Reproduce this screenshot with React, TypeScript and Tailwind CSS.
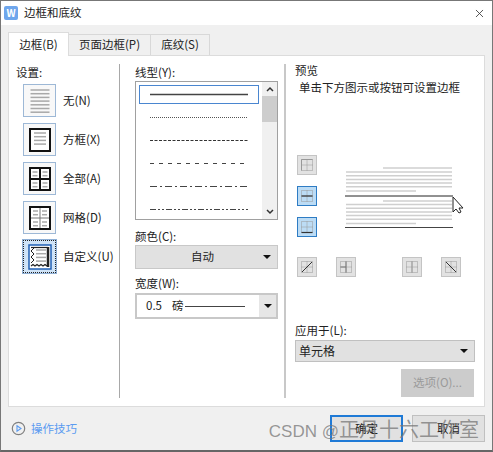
import type { ReactNode } from "react";
import { X } from "lucide-react";

const LINE_SAMPLES = [
    { dash: "", width: 1.5, color: "#444" },
    { dash: "1 1", width: 1, color: "#555" },
    { dash: "3 1.5", width: 1.2, color: "#333" },
    { dash: "4 5", width: 1.2, color: "#444" },
    { dash: "7 3 2 3", width: 1.2, color: "#444" },
    { dash: "6 2 2 2 2 2", width: 1.2, color: "#444" },
];

function TextLines({ x, y, w, rows, color = "#a8a8a8" }: { x: number; y: number; w: number; rows: number; color?: string }) {
    return (
        <>
            {Array.from({ length: rows }).map((_, i) => (
                <line key={i} x1={x} x2={x + w} y1={y + i * 3.7} y2={y + i * 3.7} stroke={color} strokeWidth="1.5" />
            ))}
        </>
    );
}

function SettingIcon({ kind }: { kind: string }) {
    return (
        <svg width="24" height="26" viewBox="0 0 24 26">
            {kind === "none" && <TextLines x={2.5} y={2} w={19} rows={7} />}
            {kind === "box" && (
                <>
                    <rect x="2" y="2" width="20" height="22" fill="#fff" stroke="#111" strokeWidth="2" />
                    <TextLines x={6} y={6} w={12} rows={4} />
                </>
            )}
            {kind === "all" && (
                <>
                    <rect x="2" y="2" width="20" height="22" fill="#fff" stroke="#111" strokeWidth="2" />
                    <line x1="12" x2="12" y1="2" y2="24" stroke="#111" strokeWidth="2" />
                    <line x1="2" x2="22" y1="13" y2="13" stroke="#111" strokeWidth="2" />
                    <TextLines x={4.5} y={6} w={5} rows={2} />
                    <TextLines x={14.5} y={6} w={5} rows={2} />
                    <TextLines x={4.5} y={17} w={5} rows={2} />
                    <TextLines x={14.5} y={17} w={5} rows={2} />
                </>
            )}
            {kind === "grid" && (
                <>
                    <rect x="2" y="2" width="20" height="22" fill="#fff" stroke="#111" strokeWidth="2" />
                    <line x1="12" x2="12" y1="3" y2="23" stroke="#777" strokeWidth="1" />
                    <line x1="3" x2="21" y1="13" y2="13" stroke="#777" strokeWidth="1" />
                    <TextLines x={5} y={6} w={5} rows={2} />
                    <TextLines x={14} y={6} w={5} rows={2} />
                    <TextLines x={5} y={17} w={5} rows={2} />
                    <TextLines x={14} y={17} w={5} rows={2} />
                </>
            )}
            {kind === "custom" && (
                <>
                    <rect x="1" y="1" width="22" height="24" fill="#fff" stroke="#1f5fb4" strokeWidth="1.5" />
                    <path d="M20 3v20" stroke="#222" strokeWidth="2.5" />
                    <path d="M3 3.5h17" stroke="#222" strokeWidth="1.2" />
                    <path d="M6 4l-3 3 3 3-3 3 3 3-3 3" fill="none" stroke="#222" strokeWidth="1" />
                    <path d="M3 22l2-1.5 2 1.5 2-1.5 2 1.5 2-1.5 2 1.5 2-1.5 2 1.5" fill="none" stroke="#222" strokeWidth="1.2" />
                    <TextLines x={8} y={6} w={10} rows={4} />
                </>
            )}
        </svg>
    );
}

function SettingRow({ kind, label, selected }: { kind: string; label: string; selected?: boolean }) {
    return (
        <div className="flex items-center">
            <div
                className={
                    selected
                        ? "flex h-[33px] w-[33px] items-center justify-center border border-dotted border-[#222] bg-[#cfe3f7] outline outline-1 outline-[#8fb0d6]"
                        : "flex h-[33px] w-[33px] items-center justify-center border border-[#9db8d6] bg-[#f8f8f8]"
                }
            >
                <SettingIcon kind={kind} />
            </div>
            <span className="ml-[7px] text-[11.5px]">{label}</span>
        </div>
    );
}

function BorderButton({ active, children }: { active?: boolean; children?: ReactNode }) {
    return (
        <div
            className={
                active
                    ? "flex h-5 w-5 items-center justify-center border border-[#2e7cc4] bg-[#bcdcf5]"
                    : "flex h-5 w-5 items-center justify-center border border-[#c4c4c4] bg-[#e2e2e2]"
            }
        >
            <svg width="16" height="16" viewBox="0 0 16 16">
                <rect x="2.5" y="2.5" width="11" height="11" fill="none" stroke="#999" strokeDasharray="1 1" />
                <path d="M8 2.5v11M2.5 8h11" stroke="#999" strokeDasharray="1 1" />
                {children}
            </svg>
        </div>
    );
}

function Caret() {
    return <div className="h-0 w-0 border-x-[4px] border-t-[4px] border-x-transparent border-t-[#111]" />;
}

export default function App() {
    return (
        <div className="relative flex h-[452px] w-[493px] flex-col overflow-hidden border-x border-t border-b-2 border-x-[#777] border-t-[#777] border-b-[#666] bg-[#f0f0f0] font-['Noto_Sans_CJK_SC',sans-serif] text-[#222]">
            {/* title bar */}
            <div className="flex h-[24px] shrink-0 items-center bg-white pl-[3px] pr-[6px]">
                <div className="flex h-[14px] w-[14px] items-center justify-center rounded-[2px] bg-[#6ea6ec] text-[10px] font-bold leading-none text-white">
                    W
                </div>
                <span className="ml-[6px] text-[11.5px]">边框和底纹</span>
                <X className="ml-auto h-[13px] w-[13px] text-[#333]" strokeWidth={1.5} />
            </div>

            {/* tabs */}
            <div className="mt-[7px] flex h-[23px] shrink-0 items-end pl-[7px] text-[11.5px]">
                <div className="z-10 -mb-px flex h-[24px] w-[61px] items-center justify-center border border-b-0 border-[#dcdcdc] bg-white">
                    边框(B)
                </div>
                <div className="flex h-[21px] w-[82px] items-center justify-center border border-b-0 border-l-0 border-[#d8d8d8] bg-[#f0f0f0]">
                    页面边框(P)
                </div>
                <div className="flex h-[21px] w-[59px] items-center justify-center border border-b-0 border-l-0 border-[#d8d8d8] bg-[#f0f0f0]">
                    底纹(S)
                </div>
            </div>

            {/* panel */}
            <div className="mx-[7px] flex h-[352px] shrink-0 border border-[#dcdcdc] bg-white text-[11.5px]">
                {/* settings */}
                <div className="my-2 w-[111px] border-r border-[#a8a8a8] pl-[7px]">
                    <div className="leading-[16px]">设置:</div>
                    <div className="mt-[4px] flex flex-col gap-[6px] pl-[7px]">
                        <SettingRow kind="none" label="无(N)" />
                        <SettingRow kind="box" label="方框(X)" />
                        <SettingRow kind="all" label="全部(A)" />
                        <SettingRow kind="grid" label="网格(D)" />
                        <SettingRow kind="custom" label="自定义(U)" selected />
                    </div>
                </div>

                {/* line style */}
                <div className="my-2 w-[166px] border-r-2 border-[#c8c8c8] pl-[15px]">
                    <div className="leading-[16px]">线型(Y):</div>
                    <div className="mt-[1px] flex h-[139px] w-[143px] border border-[#a0a0a0] bg-white">
                        <div className="w-[126px] pl-[3px] pt-[3px]">
                            {LINE_SAMPLES.map((s, i) => (
                                <div
                                    key={i}
                                    className={
                                        i === 0
                                            ? "flex h-[19px] w-[120px] items-center justify-center border border-[#4a86d0]"
                                            : "mt-[4px] flex h-[19px] w-[120px] items-center justify-center"
                                    }
                                >
                                    <svg width="98" height="3" viewBox="0 0 98 3">
                                        <line x1="0" x2="98" y1="1.5" y2="1.5" stroke={s.color} strokeWidth={s.width} strokeDasharray={s.dash} />
                                    </svg>
                                </div>
                            ))}
                        </div>
                        <div className="flex w-[15px] flex-col items-center bg-[#f0f0f0]">
                            <div className="flex h-[14px] items-center">
                                <svg width="8" height="6" viewBox="0 0 8 6">
                                    <path d="M1 5l3-3 3 3" fill="none" stroke="#333" strokeWidth="1.5" />
                                </svg>
                            </div>
                            <div className="h-[26px] w-full bg-[#cdcdcd]" />
                            <div className="mt-auto flex h-[14px] items-center">
                                <svg width="8" height="6" viewBox="0 0 8 6">
                                    <path d="M1 1l3 3 3-3" fill="none" stroke="#333" strokeWidth="1.5" />
                                </svg>
                            </div>
                        </div>
                    </div>

                    <div className="mt-[8px] leading-[16px]">颜色(C):</div>
                    <div className="mt-[1px] flex h-[24px] w-[143px] items-center border border-[#c8c8c8] bg-[#e1e1e1]">
                        <span className="flex-1 pl-[12px] text-center">自动</span>
                        <div className="px-[6px]">
                            <Caret />
                        </div>
                    </div>

                    <div className="mt-[6px] leading-[16px]">宽度(W):</div>
                    <div className="mt-[2px] flex h-[26px] w-[143px] items-center border-2 border-[#c8c8c8] bg-[#e6e6e6]">
                        <div className="flex h-full w-[122px] items-center bg-white pl-[9px]">
                            <span>0.5</span>
                            <span className="ml-[10px]">磅</span>
                            <div className="ml-[2px] h-px w-[60px] bg-[#444]" />
                        </div>
                        <div className="pl-[5px]">
                            <Caret />
                        </div>
                    </div>
                </div>

                {/* preview */}
                <div className="flex min-w-0 flex-1 flex-col py-2 pl-[9px] pr-[7px]">
                    <div className="mt-[-2px] leading-[16px]">预览</div>
                    <div className="mt-[1px] pl-[4px] text-[11.5px] leading-[16px]">单击下方图示或按钮可设置边框</div>

                    <div className="ml-[2px] mt-[60px] flex items-start">
                        <div className="flex flex-col gap-[11px]">
                            <BorderButton>
                                <path d="M2.5 2.5h11M2.5 2.5v11" stroke="#999" />
                            </BorderButton>
                            <BorderButton active>
                                <path d="M2.5 8h11" stroke="#333" strokeWidth="1.2" />
                            </BorderButton>
                            <BorderButton active>
                                <path d="M2.5 13.5h11" stroke="#333" strokeWidth="1.2" />
                            </BorderButton>
                        </div>
                        <svg className="ml-[28px] mt-[9px]" width="122" height="66" viewBox="345 165 122 66">
                            <TextLines x={383} y={169} w={69} rows={1} color="#cfcfcf" />
                            <TextLines x={346} y={173} w={106} rows={5} color="#cfcfcf" />
                            <TextLines x={346} y={192} w={70} rows={1} color="#cfcfcf" />
                            <line x1="345" x2="453" y1="197" y2="197" stroke="#222" strokeWidth="1" />
                            <TextLines x={383} y={202} w={69} rows={1} color="#cfcfcf" />
                            <TextLines x={346} y={205.5} w={106} rows={5} color="#cfcfcf" />
                            <TextLines x={346} y={224.5} w={70} rows={1} color="#cfcfcf" />
                            <line x1="345" x2="453" y1="228.5" y2="228.5" stroke="#444" strokeWidth="1.2" />
                            <path d="M453 198v15l3-3 3 4 2-1-2-4h4z" fill="#fff" stroke="#222" strokeWidth="1" />
                        </svg>
                    </div>

                    <div className="ml-[2px] mt-[20px] flex">
                        <BorderButton>
                            <path d="M3 13L13 3" stroke="#333" />
                        </BorderButton>
                        <div className="ml-[19px]">
                            <BorderButton>
                                <path d="M8 2.5v11M2.5 8h5.5" stroke="#777" />
                            </BorderButton>
                        </div>
                        <div className="ml-[46px]">
                            <BorderButton>
                                <path d="M8 2.5v11" stroke="#999" />
                            </BorderButton>
                        </div>
                        <div className="ml-[19px]">
                            <BorderButton>
                                <path d="M3 3l10 10" stroke="#333" />
                            </BorderButton>
                        </div>
                    </div>

                    <div className="mt-[45px] leading-[16px]">应用于(L):</div>
                    <div className="mt-[2px] flex h-[22px] w-[180px] items-center justify-between border border-[#c0c0c0] bg-[#e1e1e1] pl-[3px] pr-[6px] text-[12px]">
                        <span>单元格</span>
                        <Caret />
                    </div>
                    <div className="ml-[106px] mt-[7px] flex h-[28px] w-[73px] items-center justify-center bg-[#cccccc] text-[#9a9a9a]">
                        选项(O)...
                    </div>
                </div>
            </div>

            {/* footer */}
            <div className="flex flex-1 items-center pl-[10px] pr-[7px] text-[11.5px]">
                <svg width="15" height="15" viewBox="0 0 15 15">
                    <circle cx="7.5" cy="7.5" r="6.2" fill="none" stroke="#808080" strokeWidth="1.2" />
                    <path d="M6 4.7l4 2.8-4 2.8z" fill="none" stroke="#5b9bf0" strokeWidth="1.1" />
                </svg>
                <span className="ml-[5px] text-[#5b9bf0]">操作技巧</span>
                <div className="ml-auto flex gap-[9px]">
                    <div className="flex h-[27px] w-[73px] items-center justify-center border-2 border-[#1f7ad6] bg-[#e1e1e1]">确定</div>
                    <div className="flex h-[27px] w-[73px] items-center justify-center border border-[#c0c0c0] bg-[#e1e1e1]">取消</div>
                </div>
            </div>

            {/* watermark */}
            <div className="absolute bottom-[6px] right-[13px] whitespace-nowrap font-['Liberation_Sans','Noto_Sans_CJK_SC',sans-serif] text-[20px] leading-[24px] text-[#777]/75">
                <span className="text-[17px]">CSDN @</span>正月十六工作室
            </div>
        </div>
    );
}
